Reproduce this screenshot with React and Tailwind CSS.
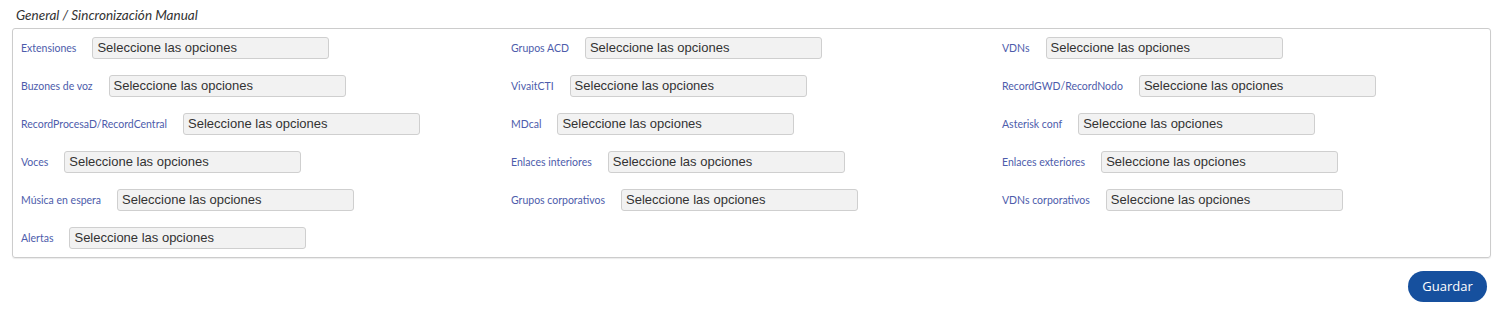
import React from "react";

const columns = [
  ["Extensiones", "Buzones de voz", "RecordProcesaD/RecordCentral", "Voces", "Música en espera", "Alertas"],
  ["Grupos ACD", "VivaitCTI", "MDcal", "Enlaces interiores", "Grupos corporativos"],
  ["VDNs", "RecordGWD/RecordNodo", "Asterisk conf", "Enlaces exteriores", "VDNs corporativos"],
];

const Field = ({ label }) => (
  <div className="flex items-center gap-4 h-[22px]">
    <span className="pt-[2px] text-[10.5px] text-[#4d5cab] font-['Lato',sans-serif] whitespace-nowrap">{label}</span>
    <div className="w-[237px] h-[22px] flex items-center px-[4px] bg-[#f2f2f2] border border-[#cfcfcf] rounded-[3px] text-[13px] text-[#333] font-['Liberation_Sans',Arial,sans-serif]">
      Seleccione las opciones
    </div>
  </div>
);

export default function App() {
  return (
    <div className="w-[1500px] h-[313px] bg-white pl-3 pr-[9px] pt-[7px]">
      <h2 className="pl-1 text-[13.5px] italic text-[#333] font-['Lato',sans-serif] leading-4">
        General / Sincronización Manual
      </h2>
      <div className="mt-[5px] border border-[#cccccc] rounded-[3px] shadow-[0_1px_1px_rgba(0,0,0,0.08)] pl-2 pt-2 pb-2 grid grid-cols-[490px_491px_1fr]">
        {columns.map((col, i) => (
          <div key={i} className="flex flex-col gap-4">
            {col.map((label) => (
              <Field key={label} label={label} />
            ))}
          </div>
        ))}
      </div>
      <div className="flex justify-end mt-[13px] pr-[4px]">
        <button className="w-[79px] h-[31px] rounded-full bg-[#16509e] text-white text-[13px] font-['Open_Sans',sans-serif]">
          Guardar
        </button>
      </div>
    </div>
  );
}
